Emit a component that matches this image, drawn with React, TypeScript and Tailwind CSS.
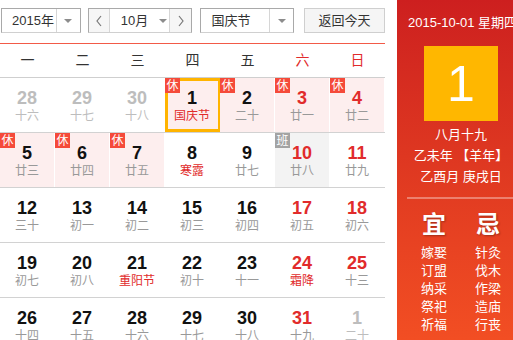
import React from "react";

type Cell = {
  d: string;
  l: string;
  out?: boolean;
  fest?: boolean;
  badge?: "休" | "班";
  sel?: boolean;
};

const rows: Cell[][] = [
  [
    { d: "28", l: "十六", out: true },
    { d: "29", l: "十七", out: true },
    { d: "30", l: "十八", out: true },
    { d: "1", l: "国庆节", fest: true, badge: "休", sel: true },
    { d: "2", l: "二十", badge: "休" },
    { d: "3", l: "廿一", badge: "休" },
    { d: "4", l: "廿二", badge: "休" },
  ],
  [
    { d: "5", l: "廿三", badge: "休" },
    { d: "6", l: "廿四", badge: "休" },
    { d: "7", l: "廿五", badge: "休" },
    { d: "8", l: "寒露", fest: true },
    { d: "9", l: "廿七" },
    { d: "10", l: "廿八", badge: "班" },
    { d: "11", l: "廿九" },
  ],
  [
    { d: "12", l: "三十" },
    { d: "13", l: "初一" },
    { d: "14", l: "初二" },
    { d: "15", l: "初三" },
    { d: "16", l: "初四" },
    { d: "17", l: "初五" },
    { d: "18", l: "初六" },
  ],
  [
    { d: "19", l: "初七" },
    { d: "20", l: "初八" },
    { d: "21", l: "重阳节", fest: true },
    { d: "22", l: "初十" },
    { d: "23", l: "十一" },
    { d: "24", l: "霜降", fest: true },
    { d: "25", l: "十三" },
  ],
  [
    { d: "26", l: "十四" },
    { d: "27", l: "十五" },
    { d: "28", l: "十六" },
    { d: "29", l: "十七" },
    { d: "30", l: "十八" },
    { d: "31", l: "十九" },
    { d: "1", l: "二十", out: true },
  ],
];

const weekdays = ["一", "二", "三", "四", "五", "六", "日"];

function Tri() {
  return (
    <span className="block w-0 h-0 border-l-[4px] border-r-[4px] border-t-[4px] border-l-transparent border-r-transparent border-t-[#8c8c8c]" />
  );
}

function Chevron({ dir }: { dir: "l" | "r" }) {
  return (
    <svg width="8" height="12" viewBox="0 0 8 12">
      <polyline
        points={dir === "l" ? "6,1 2,6 6,11" : "2,1 6,6 2,11"}
        fill="none"
        stroke="#777"
        strokeWidth="1.2"
      />
    </svg>
  );
}

function DayCell({ c, col }: { c: Cell; col: number }) {
  const weekend = col >= 5;
  let bg = "bg-white";
  if (c.badge === "休") bg = "bg-[#fdeeee]";
  if (c.badge === "班") bg = "bg-[#f3f3f3]";
  let numColor = "text-[#111]";
  if (weekend) numColor = "text-[#e12b2b]";
  if (c.out) numColor = "text-[#bdbdbd]";
  let lunarColor = "text-[#999]";
  if (c.out) lunarColor = "text-[#bdbdbd]";
  if (c.fest) lunarColor = "text-[#e12b2b]";
  return (
    <div className="w-[55px] h-[54px] shrink-0">
      <div className={`relative w-[54px] h-[54px] ${bg} flex flex-col items-center pt-[10px]`}>
        {c.sel && (
          <div className="absolute top-0 left-0 w-[56px] h-[54px] border-[3px] border-[#ffb400]" />
        )}
        {c.badge && (
          <div
            className={`absolute top-0 left-0 w-[15px] h-[15px] flex items-center justify-center text-[12px] leading-none text-white ${
              c.badge === "休" ? "bg-[#f54a3a]" : "bg-[#a3a3a3]"
            }`}
          >
            {c.badge}
          </div>
        )}
        <div className={`text-[18px] leading-[20px] font-bold ${numColor}`}>{c.d}</div>
        <div className={`text-[12px] leading-[17px] ${lunarColor}`}>{c.l}</div>
      </div>
    </div>
  );
}

export default function App() {
  const font = { fontFamily: '"Liberation Sans", "Noto Sans CJK SC", sans-serif' };
  return (
    <div className="w-[513px] h-[340px] overflow-hidden bg-white flex" style={font}>
      <div className="w-[385px] shrink-0 pt-[8px]">
        <div className="flex items-center h-[25px] pl-[1px] text-[13px] text-[#333]">
          <div className="w-[80px] h-full flex border border-[#a9a9a9] border-b-[#d0d0d0]">
            <div className="w-[55px] h-full flex items-center pl-[10px] border-r border-[#d6d6d6]">
              2015年
            </div>
            <div className="flex-1 flex items-center justify-center">
              <Tri />
            </div>
          </div>
          <div className="ml-[7px] w-[105px] h-full flex border border-[#a9a9a9] border-b-[#d0d0d0]">
            <div className="w-[21px] h-full flex items-center justify-center bg-[#f6f6f6] border-r border-[#d6d6d6]">
              <Chevron dir="l" />
            </div>
            <div className="w-[60px] h-full flex items-center pl-[11px] gap-[11px] border-r border-[#d6d6d6]">
              <span>10月</span>
              <Tri />
            </div>
            <div className="flex-1 h-full flex items-center justify-center bg-[#f6f6f6]">
              <Chevron dir="r" />
            </div>
          </div>
          <div className="ml-[8px] w-[94px] h-full flex border border-[#a9a9a9] border-b-[#d0d0d0]">
            <div className="w-[69px] h-full flex items-center pl-[10px] border-r border-[#d6d6d6]">
              国庆节
            </div>
            <div className="flex-1 flex items-center justify-center">
              <Tri />
            </div>
          </div>
          <div className="ml-[10px] w-[81px] h-full flex items-center justify-center bg-[#f5f5f5] border border-[#cfcfcf]">
            返回今天
          </div>
        </div>
        <div className="mt-[10px] border-t border-[#f25a48]" />
        <div className="flex h-[34px] border-b border-[#cfcfcf]">
          {weekdays.map((w, i) => (
            <div
              key={w}
              className={`w-[55px] flex items-center justify-center text-[14px] ${
                i >= 5 ? "text-[#e12b2b]" : "text-[#333]"
              }`}
            >
              {w}
            </div>
          ))}
        </div>
        {rows.map((r, ri) => (
          <div key={ri} className="flex border-b border-[#d2d2d2]">
            {r.map((c, ci) => (
              <DayCell key={ci} c={c} col={ci} />
            ))}
          </div>
        ))}
      </div>
      <div className="ml-[12px] w-[128px] shrink-0 h-[340px] bg-linear-to-b from-[#cd1f1f] to-[#f24e23] text-white">
        <div className="pt-[14px] pl-[11px] text-[13px] leading-[18px] whitespace-nowrap">
          2015-10-01 星期四
        </div>
        <div className="mt-[14px] mx-auto w-[74px] h-[75px] bg-[#ffb700] flex items-center justify-center text-[50px] leading-none">
          1
        </div>
        <div className="mt-[3px] text-center text-[13px] leading-[21px] whitespace-nowrap">
          <div>八月十九</div>
          <div>乙未年 【羊年】</div>
          <div>乙酉月 庚戌日</div>
        </div>
        <div className="mt-[10px] mx-[10px] h-[2px] bg-white/35" />
        <div className="mx-[10px] grid grid-cols-2 text-center">
          <div className="mt-[11px] text-[24px] leading-[30px] font-bold [text-shadow:1px_1px_2px_rgba(0,0,0,0.3)]">
            宜
          </div>
          <div className="mt-[11px] text-[24px] leading-[30px] font-bold [text-shadow:1px_1px_2px_rgba(0,0,0,0.3)]">
            忌
          </div>
          <div className="mt-[4px] text-[13px] leading-[18px]">
            <div>嫁娶</div>
            <div>订盟</div>
            <div>纳采</div>
            <div>祭祀</div>
            <div>祈福</div>
          </div>
          <div className="mt-[4px] text-[13px] leading-[18px]">
            <div>针灸</div>
            <div>伐木</div>
            <div>作梁</div>
            <div>造庙</div>
            <div>行丧</div>
          </div>
        </div>
      </div>
    </div>
  );
}
